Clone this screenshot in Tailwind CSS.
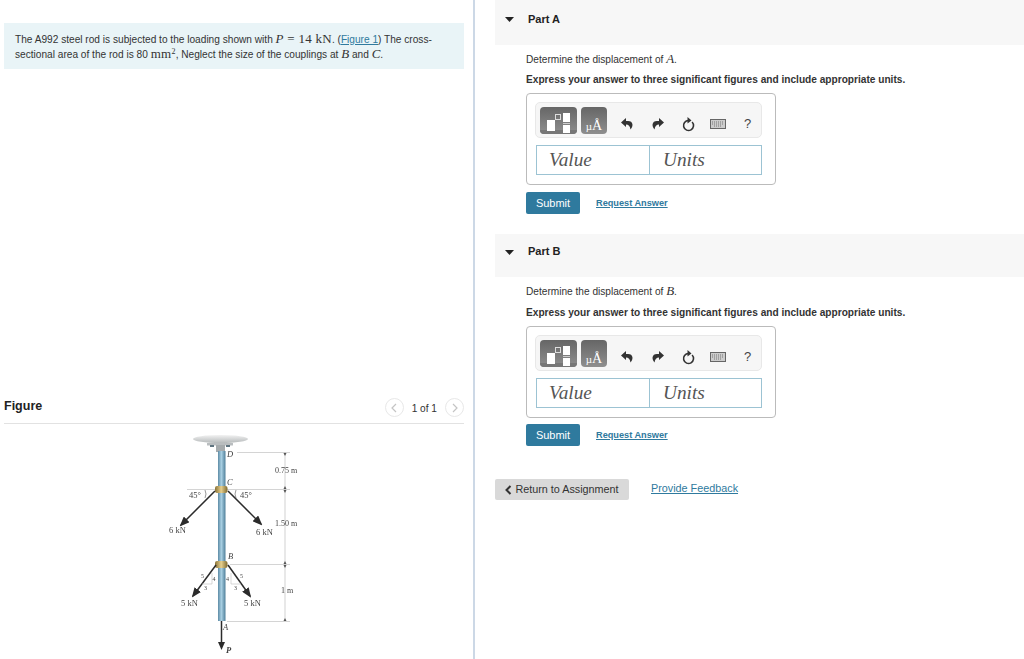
<!DOCTYPE html>
<html lang="en">
<head>
    <meta charset="UTF-8">
    <meta name="viewport" content="width=device-width, initial-scale=1.0">
    <script src="https://cdn.jsdelivr.net/npm/@tailwindcss/browser@4"></script>
    <title>Part A</title>
</head>
<body class="bg-white font-['Liberation_Sans',sans-serif] text-[#333]">
<div class="flex h-[659px] w-[1024px] overflow-hidden">

    <!-- left: problem text and figure -->
    <div class="w-[475px] shrink-0 border-r-2 border-[#ccd8e6] pl-[4px] pr-[9px] pt-[23px]">
        <div class="h-[46px] w-[460px] bg-[#e9f4f7] pl-[11px] pt-[9px] text-[10.15px] leading-[14px]">
            <p>The A992 steel rod is subjected to the loading shown with <span class="font-['Liberation_Serif',serif] text-[13px] leading-none tracking-[0.02em]"><i>P</i> = 14 kN</span>. (<a class="text-[#2f7a9e] underline" href="#">Figure 1</a>) The cross-<br>sectional area of the rod is 80 <span class="font-['Liberation_Serif',serif] text-[13px] leading-none tracking-[0.02em]">mm<sup class="text-[8px] leading-none">2</sup></span>, Neglect the size of the couplings at <i class="font-['Liberation_Serif',serif] text-[13px] leading-none">B</i> and <i class="font-['Liberation_Serif',serif] text-[13px] leading-none">C</i>.</p>
        </div>

        <div class="mt-[327px] flex h-[28px] w-[460px] items-start justify-between border-b border-[#e2e2e2] pt-[2px]">
            <h2 class="text-[12.5px] font-bold leading-[16px] text-[#222]">Figure</h2>
            <div class="flex items-center gap-[8px] text-[10.15px]">
                <span class="flex h-[19px] w-[19px] items-center justify-center rounded-full border border-[#e8e8e8]">
                    <svg width="6" height="10" viewBox="0 0 6 10"><path d="M5 1 1 5l4 4" fill="none" stroke="#c4c4c4" stroke-width="1.2"/></svg>
                </span>
                <span class="pt-[2px]">1 of 1</span>
                <span class="flex h-[19px] w-[19px] items-center justify-center rounded-full border border-[#e8e8e8]">
                    <svg width="6" height="10" viewBox="0 0 6 10"><path d="m1 1 4 4-4 4" fill="none" stroke="#c4c4c4" stroke-width="1.2"/></svg>
                </span>
            </div>
        </div>

        <!-- rod diagram -->
        <svg class="ml-[146px] mt-[6px] block blur-[0.35px]" width="160" height="229" viewBox="150 430 160 229" font-family="Liberation Serif, serif" font-size="8" fill="#444">
            <defs>
                <linearGradient id="rod" x1="0" x2="1" y1="0" y2="0">
                    <stop offset="0" stop-color="#5d8ba5"/><stop offset=".45" stop-color="#a9d0e3"/><stop offset="1" stop-color="#4f7f9a"/>
                </linearGradient>
                <linearGradient id="brass" x1="0" x2="1" y1="0" y2="0">
                    <stop offset="0" stop-color="#8a7337"/><stop offset=".5" stop-color="#e6cf8d"/><stop offset="1" stop-color="#7f6a30"/>
                </linearGradient>
                <linearGradient id="roof" x1="0" x2="0" y1="0" y2="1">
                    <stop offset="0" stop-color="#f2f2f2"/><stop offset="1" stop-color="#b5b9ba"/>
                </linearGradient>
                <marker id="head" markerWidth="10" markerHeight="8" refX="8" refY="4" orient="auto" markerUnits="userSpaceOnUse"><path d="M0 0 10 4 0 8z" fill="#2b2b2b"/></marker>
            </defs>
            <g stroke="#cfcfcf" stroke-width="0.9">
                <path d="M237 452.500h53M187 489.500h103M230 564.500h60M227 621.500h63"/>
            </g>
            <path d="M285 452v169" stroke="#bdbdbd" stroke-width="0.7"/>
            <path d="M285 456l-1.500-3h3zM285 486l-1.500 3h3zM285 493l-1.500-3h3zM285 561l-1.500 3h3zM285 568l-1.500-3h3zM285 618l-1.500 3h3z" fill="#555"/>

            <ellipse cx="220.500" cy="439" rx="27.500" ry="4" fill="url(#roof)"/>
            <rect x="207" y="443" width="26" height="2.500" fill="#b9bdbf"/>
            <rect x="210" y="445" width="4" height="2" fill="#5f7480"/>
            <rect x="226" y="445" width="4" height="2" fill="#5f7480"/>
            <path d="M216 445h9v7h-9z" fill="#a6abad"/>
            <rect x="218" y="451" width="7.500" height="170" fill="url(#rod)"/>
            <rect x="215" y="486" width="12.500" height="7" rx="2" fill="url(#brass)"/>
            <rect x="215" y="561" width="12.500" height="7" rx="2" fill="url(#brass)"/>

            <g stroke="#2b2b2b" stroke-width="1.500" fill="none">
                <path d="M215 491 181 525" marker-end="url(#head)"/>
                <path d="M228 491 261 524" marker-end="url(#head)"/>
                <path d="M216 565 193 596" marker-end="url(#head)"/>
                <path d="M228 565 250 596" marker-end="url(#head)"/>
            </g>
            <path d="M221.500 621v22" stroke="#2b2b2b" stroke-width="1.500"/>
            <path d="M218 642h7l-3.500 8z" fill="#2b2b2b"/>
            <path d="M212 573v11h-10M231 573v11h10" fill="none" stroke="#bdbdbd" stroke-width="0.6"/>
            <path d="M205 490q2 4 0 8M236 490q-2 4 0 8" fill="none" stroke="#555" stroke-width="0.6"/>

            <g font-style="italic" font-size="8.500">
                <text x="227" y="457">D</text>
                <text x="227" y="485">C</text>
                <text x="228" y="559">B</text>
                <text x="223" y="630">A</text>
                <text x="226" y="653" font-weight="bold">P</text>
            </g>
            <text x="275" y="473">0.75 m</text>
            <text x="275" y="526">1.50 m</text>
            <text x="281" y="593">1 m</text>
            <text x="169" y="533" font-size="8.500">6 kN</text>
            <text x="256" y="535" font-size="8.500">6 kN</text>
            <text x="181" y="606" font-size="8.500">5 kN</text>
            <text x="244" y="606" font-size="8.500">5 kN</text>
            <text x="189" y="498" font-size="8.500">45°</text>
            <text x="240" y="498" font-size="8.500">45°</text>
            <g font-size="6">
                <text x="201" y="578">5</text><text x="212.500" y="581">4</text><text x="204" y="590">3</text>
                <text x="240" y="578">5</text><text x="226" y="581">4</text><text x="234" y="590">3</text>
            </g>
        </svg>
    </div>

    <!-- right: parts -->
    <div class="flex-1 pl-[20px] text-[10.15px]">
        <section class="h-[234px]">
            <div class="flex h-[45px] items-start bg-[#f7f7f7] pl-[10px] pt-[12px]">
                <svg class="mt-[5px]" width="9" height="5" viewBox="0 0 9 5"><path d="M0 0h9L4.500 5z" fill="#222"/></svg>
                <h3 class="ml-[14px] text-[11px] font-bold leading-[14px] text-[#222]">Part A</h3>
            </div>
            <div class="pl-[31px]">
                <p class="mt-[7px] h-[14px] leading-[14px]">Determine the displacement of <i class="font-['Liberation_Serif',serif] text-[13px] leading-none">A</i>.</p>
                <p class="mt-[7px] h-[14px] font-bold leading-[14px]">Express your answer to three significant figures and include appropriate units.</p>
                <div class="mt-[6px] h-[92px] w-[250px] rounded-[4px] border border-[#bbb] pl-[8px] pt-[8px]">
                    <div class="flex h-[36px] w-[227px] items-center rounded-[5px] border border-[#e8e8e8] bg-[#f6f6f6] pl-[4px]">
                        <span class="relative h-[27px] w-[37px] rounded-[4px] bg-gradient-to-b from-[#666] to-[#8f8f8f]">
                            <span class="absolute left-0 right-0 bottom-0 h-[4px] rounded-b-[4px] bg-[#777]"></span>
                            <span class="absolute left-[7px] top-[13px] h-[11px] w-[8px] bg-white"></span>
                            <span class="absolute left-[15px] top-[7px] h-[6px] w-[6px] border border-[#ddd]"></span>
                            <span class="absolute left-[23px] top-[6px] h-[9px] w-[7px] bg-white"></span>
                            <span class="absolute left-[23px] top-[16px] h-[1px] w-[7px] bg-[#ccc]"></span>
                            <span class="absolute left-[23px] top-[18px] h-[8px] w-[7px] bg-white"></span>
                        </span>
                        <span class="ml-[4px] flex h-[27px] w-[26px] items-end justify-center rounded-[4px] bg-gradient-to-b from-[#666] to-[#8f8f8f] pb-[1px] font-['Liberation_Serif',serif] text-[11px] leading-[14px] text-white">µ<span class="text-[14px]">Å</span></span>
                        <div class="flex items-center pt-[8px]">
                            <svg class="ml-[14px]" width="12" height="12" viewBox="0 0 12 12"><path d="M5 0 0 4.500 5 9V6.500c2.500 0 4 1.500 4.500 5C11.500 9 12 7 11 5S8 3 5 3z" fill="#333"/></svg>
                            <svg class="ml-[19px]" width="12" height="12" viewBox="0 0 12 12"><path d="M7 0l5 4.500L7 9V6.500c-2.500 0-4 1.500-4.500 5C.5 9 0 7 1 5s3-2 6-2z" fill="#333"/></svg>
                            <svg class="ml-[18px]" width="13" height="15" viewBox="0 0 13 15"><path d="M6.500 3.500a5 5 0 1 0 3.600 1.500" fill="none" stroke="#333" stroke-width="1.600"/><path d="M5.500 0 9.500 3.500 5.500 6.500z" fill="#333"/></svg>
                            <svg class="ml-[15px]" width="16" height="10" viewBox="0 0 16 10"><rect x=".5" y=".5" width="15" height="9" fill="#ccc" stroke="#666"/><path d="M2 3h12M2 5h12M4 7h8" stroke="#777" stroke-dasharray="1 1"/></svg>
                            <span class="ml-[18px] text-[13px] leading-[14px] text-[#444]">?</span>
                        </div>
                    </div>
                    <div class="ml-[1px] mt-[7px] flex h-[30px] w-[226px] border border-[#9cc3d3] font-['Liberation_Serif',serif] text-[19.3px] italic leading-[27px] text-[#555]">
                        <span class="w-[113px] border-r border-[#9cc3d3] pl-[12px]">Value</span>
                        <span class="pl-[13px]">Units</span>
                    </div>
                </div>
                <div class="mt-[7px] flex items-center">
                    <a href="#" class="flex h-[22px] w-[54px] items-center justify-center rounded-[2px] bg-[#2f7a9e] text-[11px] text-white">Submit</a>
                    <a href="#" class="ml-[16px] pt-[1px] text-[9.2px] font-bold text-[#2f7a9e] underline">Request Answer</a>
                </div>
            </div>
        </section>

        <section class="h-[245px]">
            <div class="flex h-[43px] items-start bg-[#f7f7f7] pl-[10px] pt-[10px]">
                <svg class="mt-[6px]" width="9" height="5" viewBox="0 0 9 5"><path d="M0 0h9L4.500 5z" fill="#222"/></svg>
                <h3 class="ml-[14px] text-[11px] font-bold leading-[14px] text-[#222]">Part B</h3>
            </div>
            <div class="pl-[31px]">
                <p class="mt-[7px] h-[14px] leading-[14px]">Determine the displacement of <i class="font-['Liberation_Serif',serif] text-[13px] leading-none">B</i>.</p>
                <p class="mt-[8px] h-[14px] font-bold leading-[14px]">Express your answer to three significant figures and include appropriate units.</p>
                <div class="mt-[6px] h-[92px] w-[250px] rounded-[4px] border border-[#bbb] pl-[8px] pt-[8px]">
                    <div class="flex h-[36px] w-[227px] items-center rounded-[5px] border border-[#e8e8e8] bg-[#f6f6f6] pl-[4px]">
                        <span class="relative h-[27px] w-[37px] rounded-[4px] bg-gradient-to-b from-[#666] to-[#8f8f8f]">
                            <span class="absolute left-0 right-0 bottom-0 h-[4px] rounded-b-[4px] bg-[#777]"></span>
                            <span class="absolute left-[7px] top-[13px] h-[11px] w-[8px] bg-white"></span>
                            <span class="absolute left-[15px] top-[7px] h-[6px] w-[6px] border border-[#ddd]"></span>
                            <span class="absolute left-[23px] top-[6px] h-[9px] w-[7px] bg-white"></span>
                            <span class="absolute left-[23px] top-[16px] h-[1px] w-[7px] bg-[#ccc]"></span>
                            <span class="absolute left-[23px] top-[18px] h-[8px] w-[7px] bg-white"></span>
                        </span>
                        <span class="ml-[4px] flex h-[27px] w-[26px] items-end justify-center rounded-[4px] bg-gradient-to-b from-[#666] to-[#8f8f8f] pb-[1px] font-['Liberation_Serif',serif] text-[11px] leading-[14px] text-white">µ<span class="text-[14px]">Å</span></span>
                        <div class="flex items-center pt-[8px]">
                            <svg class="ml-[14px]" width="12" height="12" viewBox="0 0 12 12"><path d="M5 0 0 4.500 5 9V6.500c2.500 0 4 1.500 4.500 5C11.500 9 12 7 11 5S8 3 5 3z" fill="#333"/></svg>
                            <svg class="ml-[19px]" width="12" height="12" viewBox="0 0 12 12"><path d="M7 0l5 4.500L7 9V6.500c-2.500 0-4 1.500-4.500 5C.5 9 0 7 1 5s3-2 6-2z" fill="#333"/></svg>
                            <svg class="ml-[18px]" width="13" height="15" viewBox="0 0 13 15"><path d="M6.500 3.500a5 5 0 1 0 3.600 1.500" fill="none" stroke="#333" stroke-width="1.600"/><path d="M5.500 0 9.500 3.500 5.500 6.500z" fill="#333"/></svg>
                            <svg class="ml-[15px]" width="16" height="10" viewBox="0 0 16 10"><rect x=".5" y=".5" width="15" height="9" fill="#ccc" stroke="#666"/><path d="M2 3h12M2 5h12M4 7h8" stroke="#777" stroke-dasharray="1 1"/></svg>
                            <span class="ml-[18px] text-[13px] leading-[14px] text-[#444]">?</span>
                        </div>
                    </div>
                    <div class="ml-[1px] mt-[7px] flex h-[30px] w-[226px] border border-[#9cc3d3] font-['Liberation_Serif',serif] text-[19.3px] italic leading-[27px] text-[#555]">
                        <span class="w-[113px] border-r border-[#9cc3d3] pl-[12px]">Value</span>
                        <span class="pl-[13px]">Units</span>
                    </div>
                </div>
                <div class="mt-[6px] flex items-center">
                    <a href="#" class="flex h-[22px] w-[54px] items-center justify-center rounded-[2px] bg-[#2f7a9e] text-[11px] text-white">Submit</a>
                    <a href="#" class="ml-[16px] pt-[1px] text-[9.2px] font-bold text-[#2f7a9e] underline">Request Answer</a>
                </div>
            </div>
        </section>

        <div class="flex items-start">
            <a href="#" class="flex h-[21px] w-[134px] items-center justify-center rounded-[2px] bg-[#d9d9d9] text-[10.8px] text-[#333]">
                <svg class="mr-[3px]" width="7" height="10" viewBox="0 0 7 10"><path d="M5.500 1 1.500 5l4 4" fill="none" stroke="#333" stroke-width="2"/></svg>
                Return to Assignment
            </a>
            <a href="#" class="ml-[22px] text-[10.8px] leading-[18px] text-[#2f7a9e] underline">Provide Feedback</a>
        </div>
    </div>
</div>
</body>
</html>
